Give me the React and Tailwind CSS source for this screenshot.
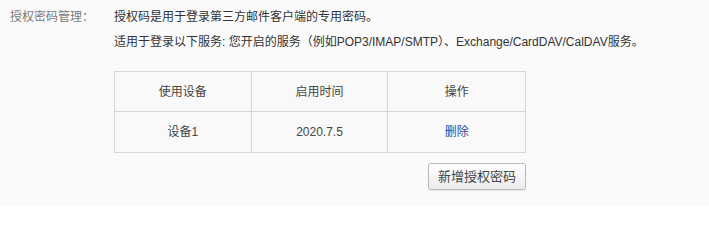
import React from "react";

export default function App() {
  const font = { fontFamily: '"Liberation Sans", "Noto Sans CJK SC", sans-serif' };
  return (
    <div className="w-[709px] h-[206px] bg-[#fafafa] text-[12px]" style={font}>
      <div className="flex pt-[5px] pl-[10px]">
        <div className="w-[104px] shrink-0 leading-[25px] text-[#7a7a7a]">授权密码管理：</div>
        <div className="flex flex-col">
          <div className="leading-[25px] text-[#333]">授权码是用于登录第三方邮件客户端的专用密码。</div>
          <div className="leading-[25px] text-[#333]">
            适用于登录以下服务: 您开启的服务（例如POP3/IMAP/SMTP）、Exchange/CardDAV/CalDAV服务。
          </div>
          <div className="mt-[16px] w-[412px] border border-[#d6d6d6] bg-[#f9f9f9] text-[#444]">
            <div className="grid grid-cols-3 h-[40px] border-b border-[#d6d6d6]">
              <div className="flex items-center justify-center border-r border-[#d6d6d6]">使用设备</div>
              <div className="flex items-center justify-center border-r border-[#d6d6d6]">启用时间</div>
              <div className="flex items-center justify-center">操作</div>
            </div>
            <div className="grid grid-cols-3 h-[40px]">
              <div className="flex items-center justify-center border-r border-[#d6d6d6]">设备1</div>
              <div className="flex items-center justify-center border-r border-[#d6d6d6]">2020.7.5</div>
              <div className="flex items-center justify-center">
                <a className="text-[#2d4c9b] cursor-pointer">删除</a>
              </div>
            </div>
          </div>
          <div className="flex justify-end w-[412px] mt-[10px]">
            <button className="w-[98px] h-[27px] rounded-[3px] border border-[#b9b9b9] bg-gradient-to-b from-[#ffffff] to-[#ececec] text-[13px] text-[#444] shadow-[0_1px_1px_rgba(0,0,0,0.08)]">
              新增授权密码
            </button>
          </div>
        </div>
      </div>
    </div>
  );
}
